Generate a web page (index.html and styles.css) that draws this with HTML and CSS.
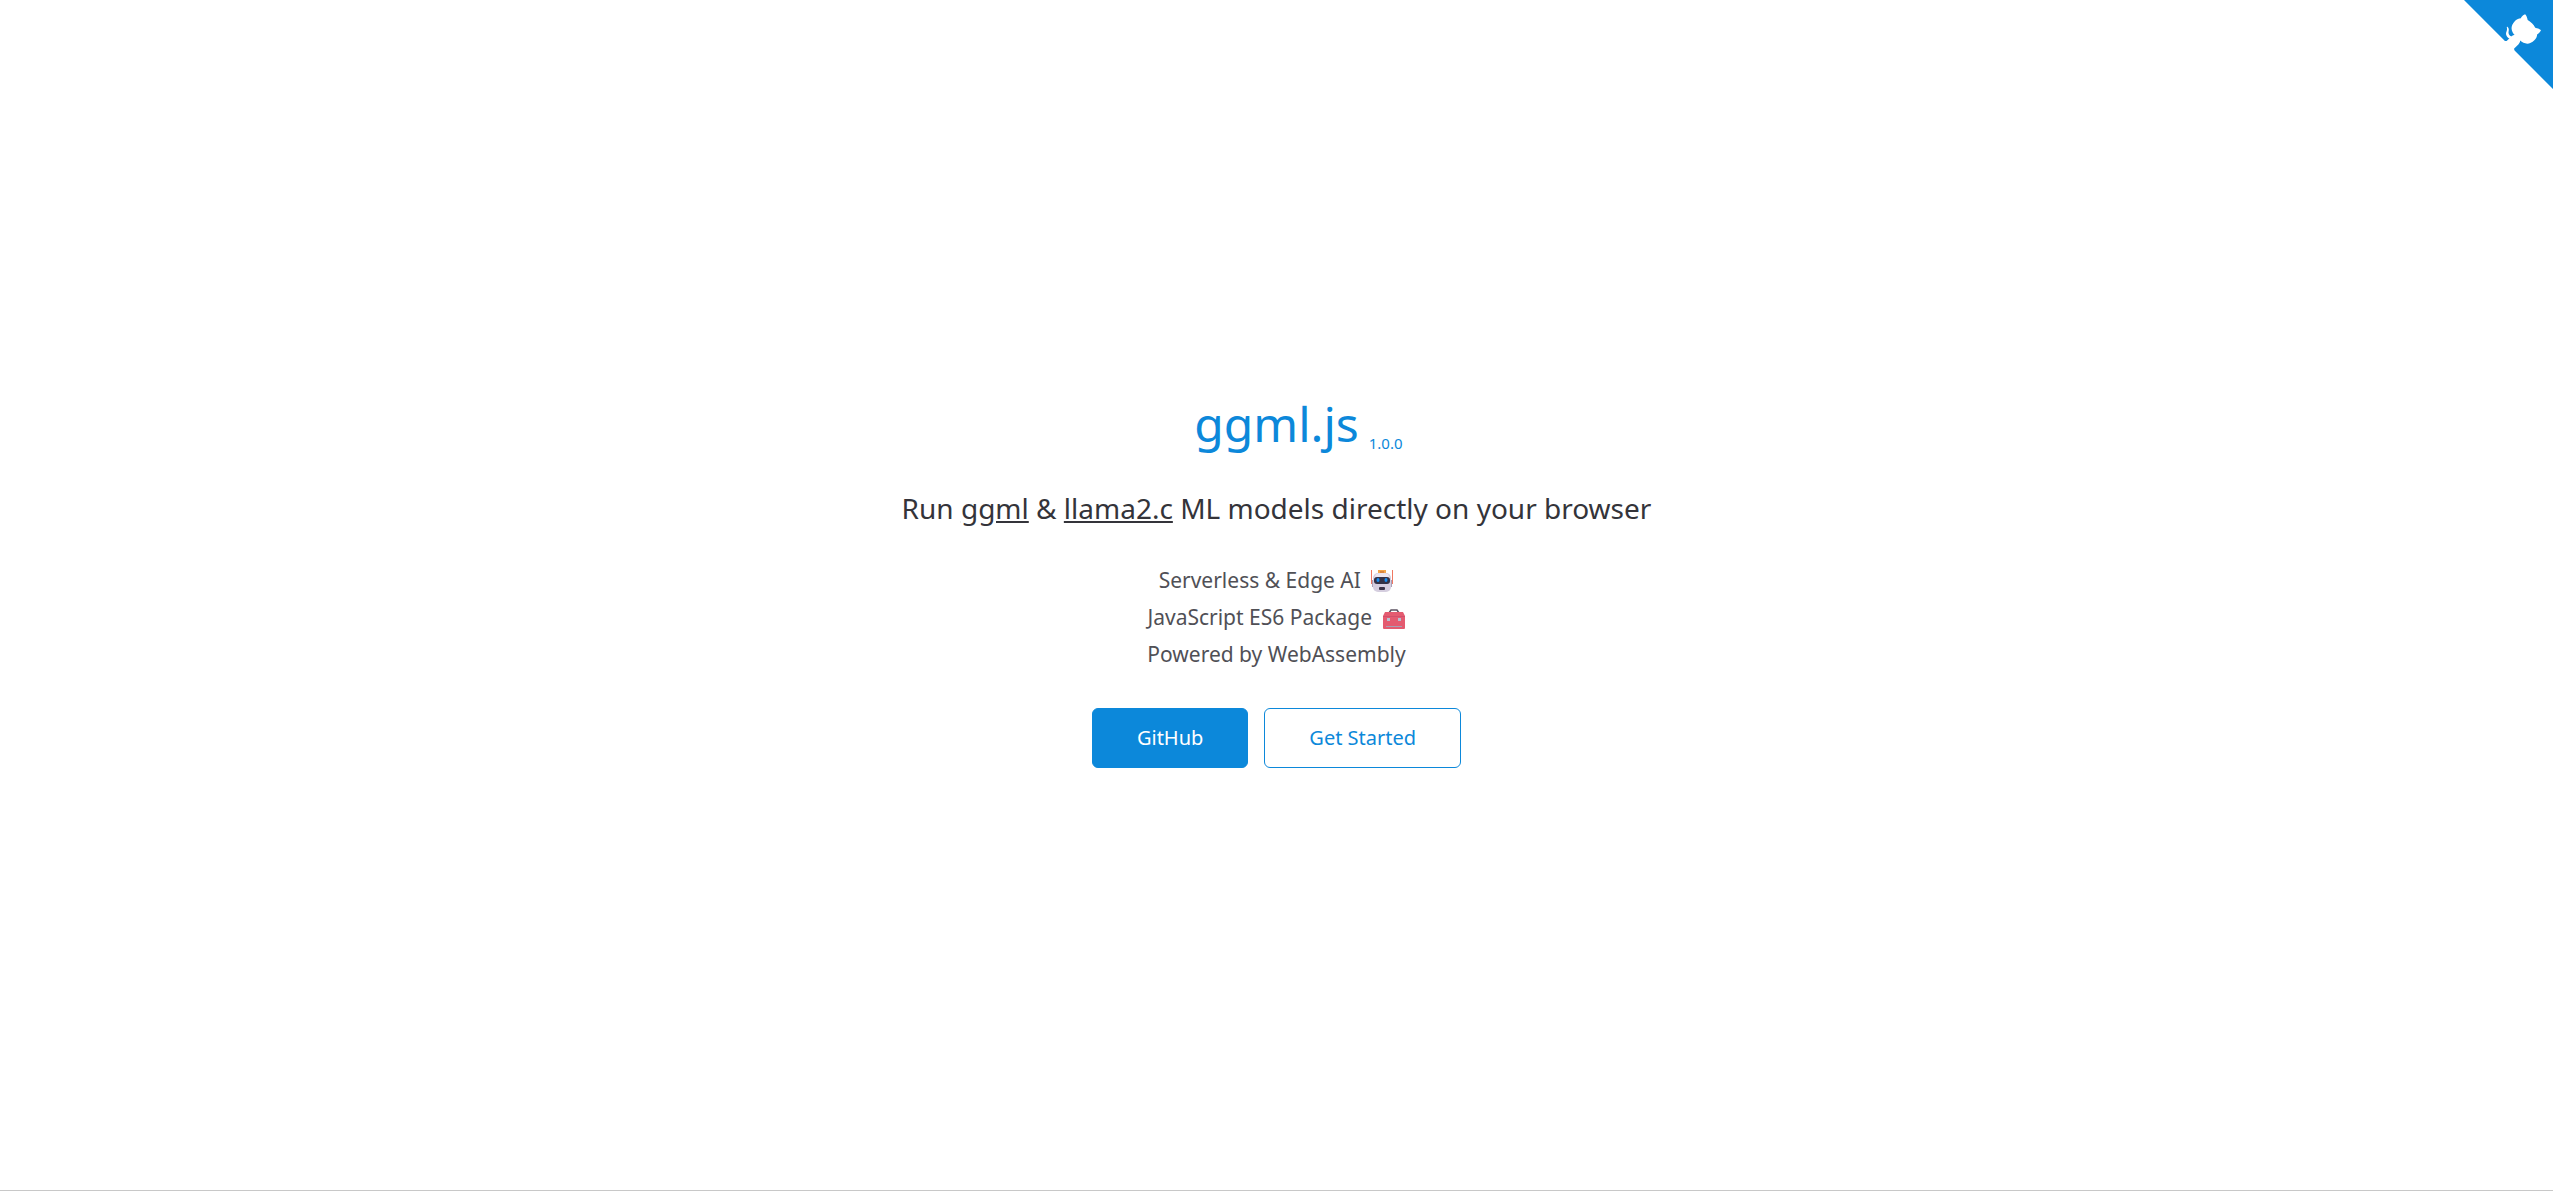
FILE: index.html
```html
<!DOCTYPE html>
<html lang="en">
<head>
<meta charset="utf-8">
<meta name="viewport" content="width=device-width, initial-scale=1">
<title>ggml.js</title>
<link rel="stylesheet" href="styles.css">
</head>
<body>
<a class="github-corner" href="#github" aria-label="View source on GitHub">
<svg viewBox="0 0 250 250" aria-hidden="true">
<path d="M0,0 L115,115 L130,115 L142,142 L250,250 L250,0 Z"/>
<path class="cat" d="M128.3,109.0 C113.8,99.7 119.0,89.6 119.0,89.6 C122.0,82.7 120.5,78.6 120.5,78.6 C119.2,72.0 123.4,76.3 123.4,76.3 C127.3,80.9 125.5,87.3 125.5,87.3 C122.9,97.6 130.6,101.9 134.4,103.2"/>
<path class="cat" d="M115.0,115.0 C114.9,115.1 118.7,116.5 119.8,115.4 L133.7,101.6 C136.9,99.2 139.9,98.4 142.2,98.6 C133.8,88.0 127.5,74.4 143.8,58.0 C148.5,53.4 154.0,51.2 159.7,51.0 C160.3,49.4 163.2,43.6 171.4,40.1 C171.4,40.1 176.1,42.5 178.8,56.2 C183.1,58.6 187.2,61.8 190.9,65.4 C194.5,69.0 197.7,73.2 200.1,77.6 C213.8,80.2 216.3,84.9 216.3,84.9 C212.7,93.1 206.9,96.0 205.4,96.6 C205.1,102.4 203.0,107.8 198.3,112.5 C181.9,128.9 168.3,122.5 157.7,114.1 C157.9,116.9 156.7,120.9 152.7,124.9 L141.0,136.5 C139.8,137.7 141.6,141.9 141.8,141.8 Z"/>
</svg>
</a>
<main class="cover">
<h1 class="title"><span class="name">ggml.js<small class="version">1.0.0</small></span></h1>
<p class="tagline">Run <a href="#ggml">ggml</a> &amp; <a href="#llama2">llama2.c</a> ML models directly on your browser</p>
<ul class="features">
<li>Serverless &amp; Edge AI
<svg class="emoji" viewBox="0 0 24 24" role="img" aria-label="robot">
<path fill="#f3a64b" d="M8 1h8v4H8z"/><path fill="#d9853f" d="M10 2h4v2h-4z"/>
<path fill="#ef7862" d="M1 1h1v14H1zM22 1h1v14h-1z"/>
<path fill="#aaa0b9" d="M2 11h3v7H2zM19 11h3v7h-3z"/>
<rect x="3" y="4" width="18" height="19" rx="5" fill="#d5cedf"/>
<path fill="#ece6ef" d="M6 5q6-2 12 0l2 4H4z"/>
<rect x="4" y="8" width="16" height="7" rx="3" fill="#333247"/>
<ellipse cx="8" cy="11" rx="1.5" ry="2" fill="#168cf0"/><ellipse cx="16" cy="11" rx="1.5" ry="2" fill="#168cf0"/>
<rect x="9" y="18" width="6" height="3" rx="1" fill="#3c3549"/>
</svg></li>
<li>JavaScript ES6 Package
<svg class="emoji" viewBox="0 0 24 24" role="img" aria-label="toolbox">
<path fill="none" stroke="#5c5361" stroke-width="1.5" d="M7 7l2-3h6l2 3"/>
<path fill="#e45b70" d="M3 6h18l2 4v12q0 1-1 1H2q-1 0-1-1V10z"/>
<path fill="#d1506c" d="M1 10h22v1H1z"/>
<path fill="#b9bfd0" d="M5 12h3v3H5zM16 12h3v3h-3z"/>
<path fill="#a8a0b4" d="M4 20h16v1H4z"/>
</svg></li>
<li>Powered by WebAssembly</li>
</ul>
<nav class="actions">
<a class="action primary" href="#github">GitHub</a>
<a class="action" href="#start">Get Started</a>
</nav>
</main>
</body>
</html>
```
FILE: styles.css
```css
* {
  box-sizing: border-box;
}

body {
  margin: 0;
  background: #fff;
  color: #34343a;
  font-family: "Segoe UI", "Noto Sans", sans-serif;
}

a {
  color: inherit;
}

.github-corner {
  position: absolute;
  top: 0;
  right: 0;
  color: #0c88da;
}

.github-corner svg {
  display: block;
  width: 89px;
  height: 89px;
  fill: currentColor;
}

.github-corner .cat {
  fill: #fff;
}

.cover {
  min-height: 100vh;
  display: flex;
  flex-direction: column;
  align-items: center;
  justify-content: center;
  padding-bottom: 34px;
  border-bottom: 1px solid #c8c8c8;
  text-align: center;
}

.title {
  margin: 0 0 28px;
  color: #0c88da;
  font-size: 48px;
  line-height: 72px;
  font-weight: 400;
}

.name {
  position: relative;
}

.version {
  position: absolute;
  left: 100%;
  bottom: 3px;
  margin-left: 10px;
  font-size: 15px;
  line-height: 20px;
}

.tagline {
  margin: 0 0 34px;
  font-size: 28px;
  line-height: 40px;
}

.features {
  margin: 0 0 35px;
  padding: 0;
  list-style: none;
  color: #505056;
  font-size: 21px;
  line-height: 37px;
}

.emoji {
  width: 24px;
  height: 24px;
  margin-left: 4px;
  vertical-align: -5px;
}

.actions {
  display: flex;
  gap: 16px;
}

.action {
  padding: 0 44px;
  border: 1px solid #0c88da;
  border-radius: 6px;
  color: #0c88da;
  font-size: 20px;
  line-height: 58px;
  text-decoration: none;
}

.primary {
  background: #0c88da;
  color: #fff;
}
```
